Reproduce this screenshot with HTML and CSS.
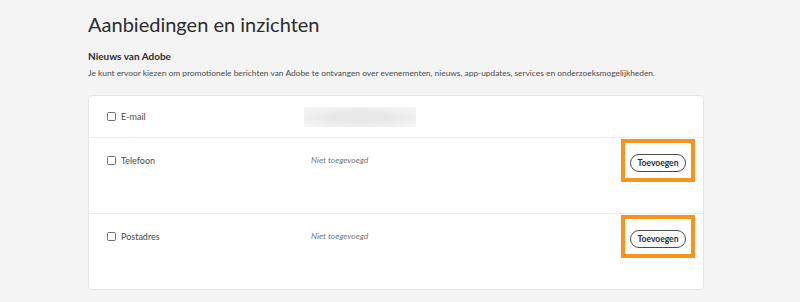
FILE: index.html
```html
<!DOCTYPE html>
<html lang="nl">
<head>
    <meta charset="UTF-8">
    <meta name="viewport" content="width=device-width, initial-scale=1.0">
    <title>Aanbiedingen en inzichten</title>
    <link rel="stylesheet" href="styles.css">
</head>
<body>
    <div class="page">
        <h1>Aanbiedingen en inzichten</h1>
        <h2>Nieuws van Adobe</h2>
        <p class="intro">Je kunt ervoor kiezen om promotionele berichten van Adobe te ontvangen over evenementen, nieuws, app-updates, services en onderzoeksmogelijkheden.</p>

        <div class="card">
            <div class="row row-short">
                <label class="option"><span class="box"></span>E-mail</label>
                <div class="value"><span class="blurred"></span></div>
            </div>
            <div class="row">
                <div class="line">
                    <label class="option"><span class="box"></span>Telefoon</label>
                    <div class="value"><em>Niet toegevoegd</em></div>
                    <div class="highlight"><button>Toevoegen</button></div>
                </div>
            </div>
            <div class="row">
                <div class="line">
                    <label class="option"><span class="box"></span>Postadres</label>
                    <div class="value"><em>Niet toegevoegd</em></div>
                    <div class="highlight"><button>Toevoegen</button></div>
                </div>
            </div>
        </div>
    </div>
</body>
</html>
```

FILE: styles.css
```css
body {
    font-family: Lato, "Open Sans", sans-serif;
    background-color: #f4f4f4;
    color: #2c2c2c;
    margin: 0;
    padding: 0;
}

.page {
    width: 616px;
    padding: 9px 0 0 88px;
}

h1 {
    font-size: 20px;
    font-weight: 400;
    margin: 0;
    height: 40px;
    line-height: 30px;
}

h2 {
    font-size: 10px;
    font-weight: 700;
    margin: 0;
    line-height: 14px;
}

.intro {
    font-size: 8.4px;
    color: #4b4b4b;
    margin: 4px 0 16px;
    line-height: 12px;
}

.card {
    background: #fff;
    border: 1px solid #e6e6e6;
    border-radius: 4px;
}

.row {
    box-sizing: border-box;
    height: 76px;
    padding: 2px 8px 0 18px;
    border-top: 1px solid #ececec;
}

.row-short {
    height: 41px;
    border-top: none;
    display: flex;
    align-items: center;
    padding-top: 0;
}

.line {
    display: flex;
    align-items: center;
    height: 40px;
}

.option {
    display: flex;
    align-items: center;
    gap: 5px;
    width: 204px;
    font-size: 9px;
    color: #4b4b4b;
}

.box {
    width: 7px;
    height: 7px;
    border: 1.5px solid #707070;
    border-radius: 1.5px;
}

.value {
    flex: 1;
    font-size: 8.5px;
    color: #777;
}

.blurred {
    display: block;
    width: 112px;
    height: 20px;
    margin-left: -7px;
    background: radial-gradient(ellipse at center, #e8e8e8 35%, #f7f7f7 100%);
}

.highlight {
    border: 4px solid #f7931e;
    padding: 7px 5px 6px;
}

button {
    font-family: Lato, "Open Sans", sans-serif;
    font-size: 8.5px;
    font-weight: 700;
    color: #2c2c2c;
    background: #fff;
    border: 1.5px solid #4b4b4b;
    border-radius: 9px;
    width: 56px;
    height: 18px;
    padding: 0;
    cursor: pointer;
}
```
